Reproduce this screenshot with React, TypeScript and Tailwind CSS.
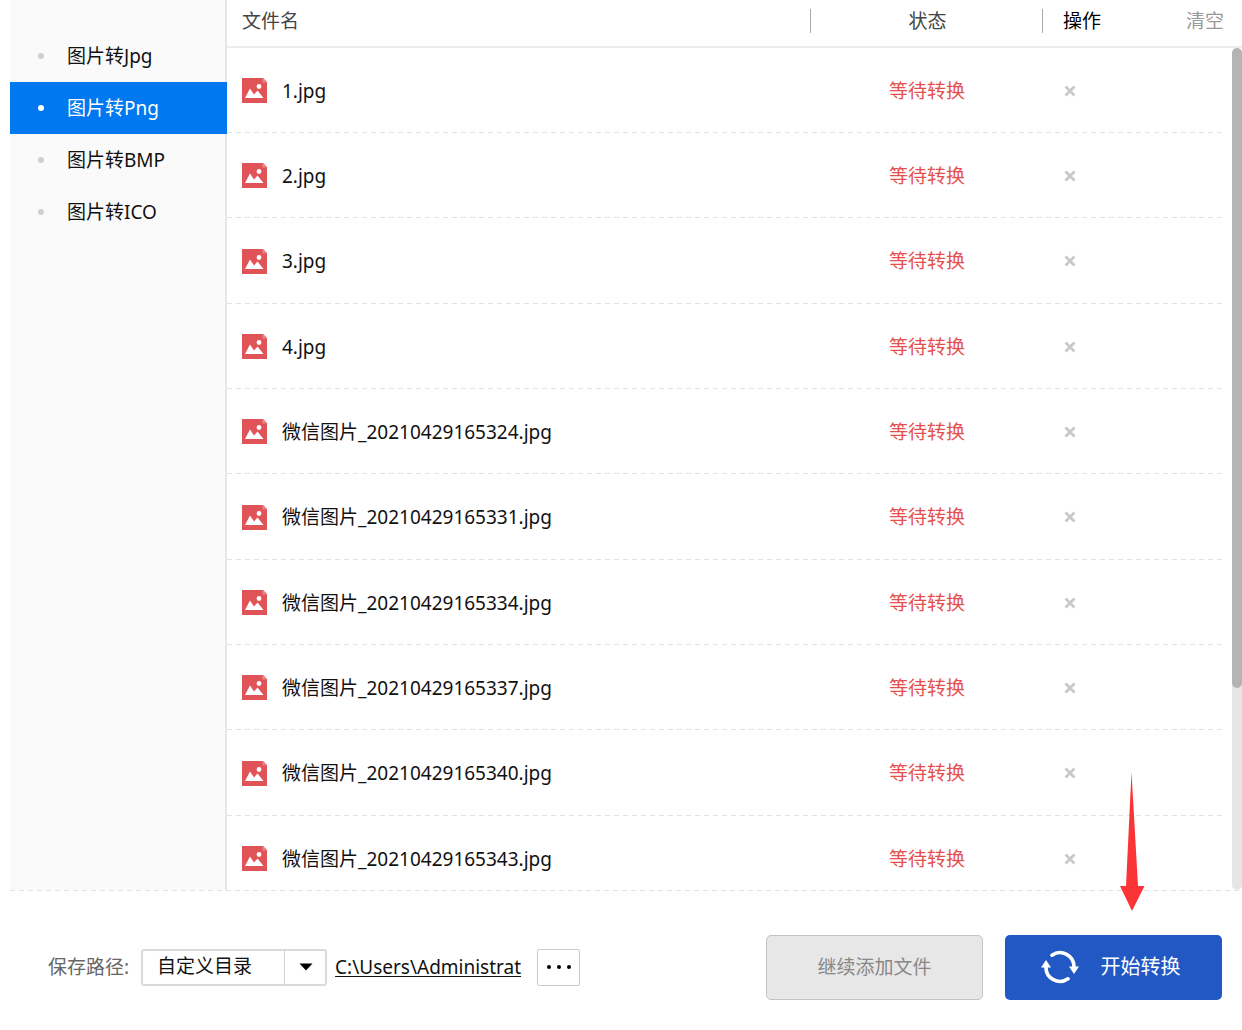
import { useState } from "react";

const formats = ["图片转Jpg", "图片转Png", "图片转BMP", "图片转ICO"];

const initialFiles = [
  "1.jpg",
  "2.jpg",
  "3.jpg",
  "4.jpg",
  "微信图片_20210429165324.jpg",
  "微信图片_20210429165331.jpg",
  "微信图片_20210429165334.jpg",
  "微信图片_20210429165337.jpg",
  "微信图片_20210429165340.jpg",
  "微信图片_20210429165343.jpg",
];

const ImageIcon = () => (
  <svg viewBox="0 0 25 25" className="h-[25px] w-[25px] shrink-0" aria-hidden="true">
    <path d="M0 0H21L25 4V25H0Z" fill="#e05457" />
    <path d="M20.5 0L25 4.5H20.5Z" fill="#e88587" />
    <path d="M3 20L8 10.5L12 16.5L15.5 12.5L21.5 20Z" fill="#fff" />
    <circle cx="17" cy="8.5" r="2.4" fill="#fff" />
  </svg>
);

const CrossIcon = () => (
  <svg viewBox="0 0 12 12" className="h-3 w-3" aria-hidden="true">
    <path d="M1.5 1.5L10.5 10.5M10.5 1.5L1.5 10.5" stroke="#c8c8c8" strokeWidth="2.8" />
  </svg>
);

const ConvertIcon = () => (
  <svg viewBox="0 0 38 34" className="h-[34px] w-[38px]" fill="none" aria-hidden="true">
    <path d="M11 5.2A14 14 0 0 1 33 17" stroke="#fff" strokeWidth="3.6" strokeLinecap="round" />
    <path d="M28 16.5H38L33 24Z" fill="#fff" />
    <path d="M27 28.8A14 14 0 0 1 5 17" stroke="#fff" strokeWidth="3.6" strokeLinecap="round" />
    <path d="M0 17.5H10L5 10Z" fill="#fff" />
  </svg>
);

const Sidebar = () => {
  const [active, setActive] = useState(1);

  return (
    <nav className="ml-[10px] w-[217px] shrink-0 border-r-2 border-[#e6e6e6] bg-[#fafafa] pt-[30px]">
      {formats.map((name, index) => (
        <button
          key={name}
          onClick={() => setActive(index)}
          className={
            index === active
              ? "-mr-[2px] flex h-[52px] w-[217px] items-center bg-[#0078f0] pl-7 text-white"
              : "flex h-[52px] w-full items-center pl-7"
          }
        >
          <span className={index === active ? "h-[6px] w-[6px] rounded-full bg-white" : "h-[6px] w-[6px] rounded-full bg-[#cfcfcf]"} />
          <span className="ml-[23px]">{name}</span>
        </button>
      ))}
    </nav>
  );
};

const FileTable = () => {
  const [files, setFiles] = useState(initialFiles);

  return (
    <section className="flex min-w-0 flex-1 overflow-hidden">
      <div className="min-w-0 flex-1">
        <table className="w-full table-fixed border-separate border-spacing-0 text-left">
          <colgroup>
            <col />
            <col className="w-[232px]" />
            <col className="w-[184px]" />
          </colgroup>
          <thead>
            <tr className="h-12 text-[#444]">
              <th className="border-b-2 border-[#ececec] pb-1 pl-[15px] font-normal">文件名</th>
              <th className="border-b-2 border-[#ececec] pb-1 font-normal">
                <div className="h-6 border-l border-[#aaa] pl-[2px] text-center leading-6">状态</div>
              </th>
              <th className="border-b-2 border-[#ececec] pb-1 font-normal">
                <div className="flex h-6 items-center justify-between border-l border-[#aaa] pr-[2px] pl-5">
                  <span className="text-black">操作</span>
                  <button className="text-[#999]" onClick={() => setFiles([])}>清空</button>
                </div>
              </th>
            </tr>
          </thead>
          <tbody>
            {files.map((file) => (
              <tr
                key={file}
                className="h-[85px] bg-[linear-gradient(to_right,#e2e2e2_5px,transparent_5px)] bg-size-[9px_1px] bg-bottom-left bg-repeat-x nth-[3n]:h-[86px]"
              >
                <td className="pl-[15px]">
                  <div className="flex items-center gap-[15px]">
                    <ImageIcon />
                    <span>{file}</span>
                  </div>
                </td>
                <td className="pl-[2px] text-center text-[#e5504f]">等待转换</td>
                <td className="pl-[22px]">
                  <button
                    aria-label="删除"
                    className="block"
                    onClick={() => setFiles(files.filter((f) => f !== file))}
                  >
                    <CrossIcon />
                  </button>
                </td>
              </tr>
            ))}
          </tbody>
        </table>
      </div>
      <div className="flex w-4 shrink-0 flex-col">
        <div className="h-12 shrink-0 border-b-2 border-[#ececec]" />
        <div className="ml-auto w-[10px] flex-1 rounded-full bg-[#e6e6e6]">
          <div className="h-[640px] rounded-full bg-[#b4b4b4]" />
        </div>
      </div>
    </section>
  );
};

const Footer = () => (
  <footer className="relative ml-[10px] flex h-[140px] shrink-0 items-center bg-[linear-gradient(to_right,#e2e2e2_5px,transparent_5px)] bg-size-[9px_1px] bg-top-left bg-repeat-x pt-[14px] pr-5 pl-[38px]">
    <label htmlFor="dir" className="text-[#666]">保存路径:</label>
    <div className="relative ml-3">
      <select
        id="dir"
        className="h-[37px] w-[186px] appearance-none rounded-[3px] border-2 border-[#dadada] bg-white pb-[2px] pl-[14px]"
      >
        <option>自定义目录</option>
      </select>
      <span className="pointer-events-none absolute top-0 right-0 flex h-full w-[43px] items-center justify-center border-l border-[#d2d2d2]">
        <svg viewBox="0 0 14 8" className="h-2 w-[14px]" aria-hidden="true">
          <path d="M0.5 0.5H13.5L7 7.5Z" fill="#000" />
        </svg>
      </span>
    </div>
    <a href="#" className="ml-2 underline underline-offset-2">C:\Users\Administrat</a>
    <button aria-label="选择目录" className="ml-4 flex h-[37px] w-[43px] items-center justify-center gap-[6px] rounded-[2px] border border-[#ccc]">
      <span className="h-1 w-1 rounded-full bg-black" />
      <span className="h-1 w-1 rounded-full bg-black" />
      <span className="h-1 w-1 rounded-full bg-black" />
    </button>
    <button className="ml-auto h-[65px] w-[217px] rounded-[5px] border border-[#c4c4c4] bg-[#e7e7e7] text-[#888]">
      继续添加文件
    </button>
    <button className="ml-[22px] flex h-[65px] w-[217px] items-center justify-center gap-[22px] rounded-[5px] bg-[#2158c4] pr-[6px] text-xl text-white">
      <ConvertIcon />
      开始转换
    </button>
    <svg viewBox="0 0 26 140" className="absolute -top-[119px] right-[97px] h-[140px] w-[26px]" aria-hidden="true">
      <path d="M12.5 1L19 115H25.5L13 140L1 115H7Z" fill="#fb3437" />
    </svg>
  </footer>
);

export default function App() {
  return (
    <div className="flex h-screen flex-col overflow-hidden bg-white font-['Noto_Sans','Noto_Sans_CJK_SC',sans-serif] text-[19px] leading-6 text-[#111]">
      <main className="flex min-h-0 flex-1">
        <Sidebar />
        <FileTable />
      </main>
      <Footer />
    </div>
  );
}
